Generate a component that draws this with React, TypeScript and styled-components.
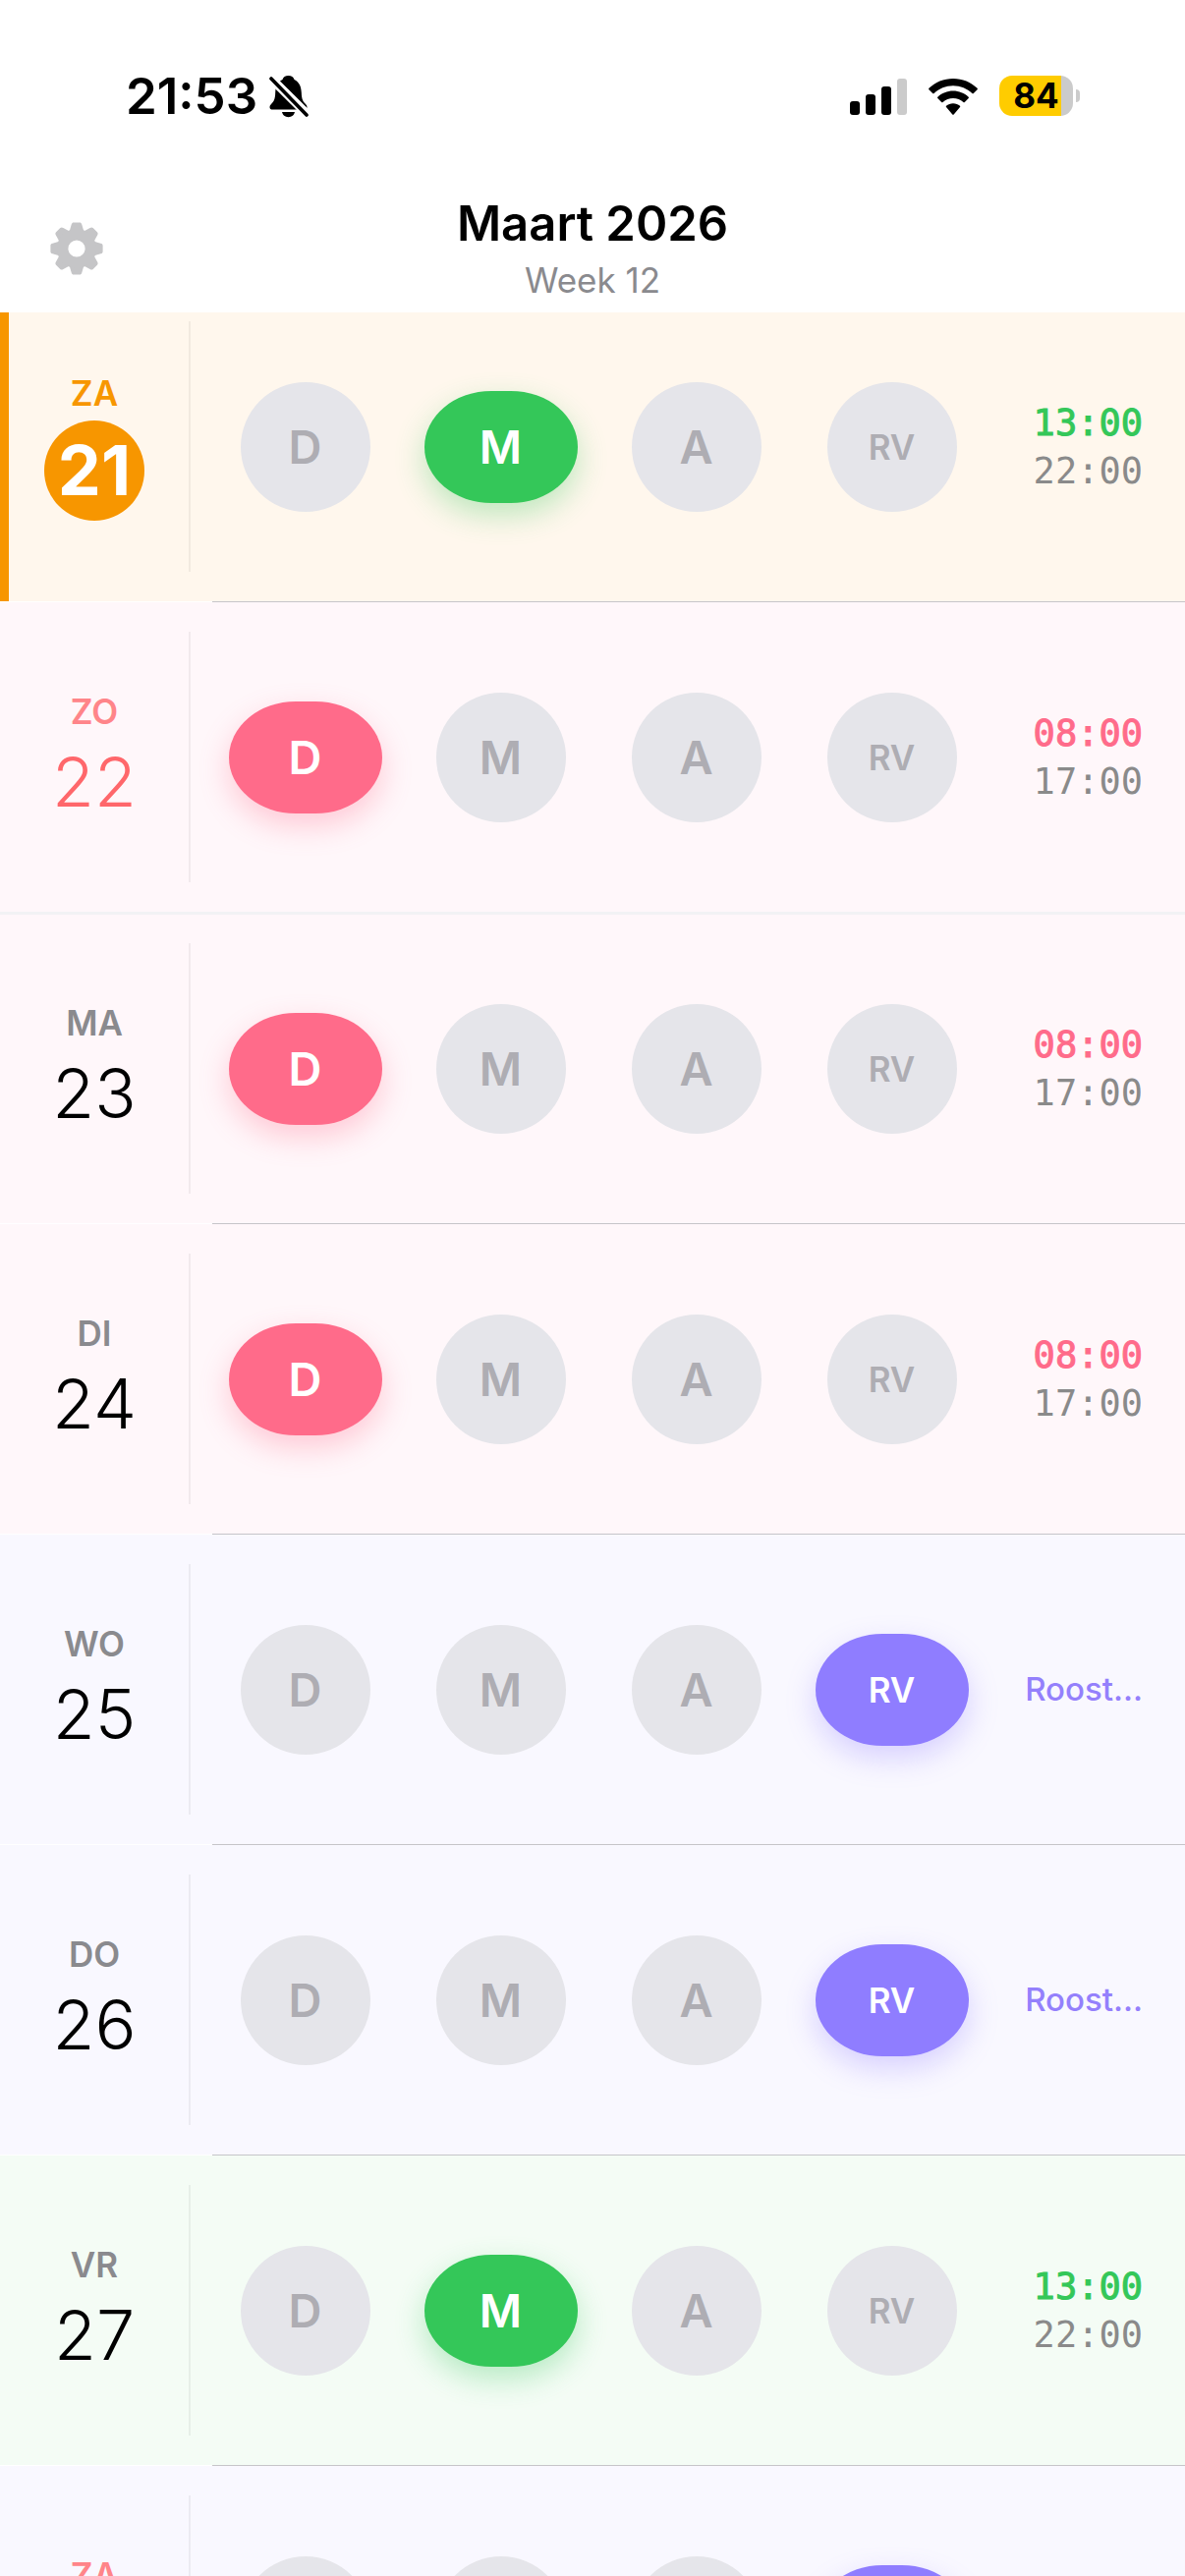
import React from "react";
import styled, { createGlobalStyle, css } from "styled-components";

const GlobalStyle = createGlobalStyle`
  *, *::before, *::after { box-sizing: border-box; }
  html, body, #root { height: 100%; }
  body {
    margin: 0;
    background: #ffffff;
    color: #000000;
    font-family: Inter, "Liberation Sans", sans-serif;
    overflow: hidden;
  }
  button { font: inherit; border: 0; padding: 0; background: none; cursor: pointer; }
`;

type ShiftCode = "D" | "M" | "A" | "RV";

const shiftColors: Record<ShiftCode, { solid: string; tint: string; shadow: string }> = {
  D: { solid: "#ff6b8a", tint: "#fff7fa", shadow: "rgba(255, 107, 138, 0.32)" },
  M: { solid: "#34c759", tint: "#f4fcf5", shadow: "rgba(52, 199, 89, 0.32)" },
  A: { solid: "#ff9500", tint: "#fff6ec", shadow: "rgba(255, 149, 0, 0.32)" },
  RV: { solid: "#8f7dff", tint: "#f9f8ff", shadow: "rgba(143, 125, 255, 0.32)" },
};

const shiftCodes: ShiftCode[] = ["D", "M", "A", "RV"];

interface Day {
  name: string;
  date: number;
  shift: ShiftCode;
  start?: string;
  end?: string;
  note?: string;
  today?: boolean;
  weekend?: boolean;
  endsWeek?: boolean;
}

const days: Day[] = [
  { name: "ZA", date: 21, shift: "M", start: "13:00", end: "22:00", today: true },
  { name: "ZO", date: 22, shift: "D", start: "08:00", end: "17:00", weekend: true, endsWeek: true },
  { name: "MA", date: 23, shift: "D", start: "08:00", end: "17:00" },
  { name: "DI", date: 24, shift: "D", start: "08:00", end: "17:00" },
  { name: "WO", date: 25, shift: "RV", note: "Roost…" },
  { name: "DO", date: 26, shift: "RV", note: "Roost…" },
  { name: "VR", date: 27, shift: "M", start: "13:00", end: "22:00" },
  { name: "ZA", date: 28, shift: "RV", note: "Roost…", weekend: true },
];

const Screen = styled.div`
  height: 100%;
  display: flex;
  flex-direction: column;
  overflow: hidden;
`;

const TopArea = styled.header`
  position: relative;
  z-index: 2;
  flex: none;
  background: #ffffff;
`;

const StatusBar = styled.div`
  display: flex;
  align-items: center;
  justify-content: space-between;
  height: 195px;
  padding: 0 107px 0 128px;
`;

const StatusGroup = styled.div<{ $gap: number }>`
  display: flex;
  align-items: center;
  gap: ${(p) => p.$gap}px;
`;

const Clock = styled.time`
  font-size: 51px;
  line-height: 60px;
  font-weight: 600;
`;

const Battery = styled.div`
  display: flex;
  align-items: center;
  gap: 3px;
`;

const BatteryBody = styled.div<{ $level: number }>`
  width: 75px;
  height: 41px;
  border-radius: 13px;
  display: flex;
  align-items: center;
  justify-content: center;
  background: linear-gradient(to right, #ffcc00 ${(p) => p.$level}%, #cbcbcb ${(p) => p.$level}%);
  font-size: 35px;
  line-height: 41px;
  font-weight: 700;
`;

const BatteryTip = styled.div`
  width: 4px;
  height: 13px;
  border-radius: 0 6px 6px 0;
  background: #cbcbcb;
`;

const TitleBar = styled.div`
  display: grid;
  grid-template-columns: 108px 1fr 108px;
  align-items: center;
  height: 123px;
  padding: 0 24px 8px;
`;

const SettingsButton = styled.button`
  justify-self: center;
  display: flex;
  color: #c5c5c7;
`;

const TitleText = styled.div`
  display: flex;
  flex-direction: column;
  align-items: center;
`;

const Title = styled.h1`
  margin: 0;
  font-size: 49px;
  line-height: 64px;
  font-weight: 600;
`;

const Subtitle = styled.p`
  margin: 0;
  font-size: 35px;
  line-height: 50px;
  color: #8a8a8e;
`;

/* The list is scrolled a little, so its first row starts under the header. */
const Schedule = styled.main`
  flex: 1;
  min-height: 0;
  margin-top: -21px;
  overflow: hidden;
`;

const Row = styled.section<{ $tint: string; $today?: boolean }>`
  display: flex;
  align-items: center;
  height: 315px;
  padding-right: 43px;
  background: ${(p) => p.$tint};
  ${(p) =>
    p.$today &&
    css`
      box-shadow: inset 9px 0 0 #f79600;
    `}
`;

const RowLine = styled.div`
  height: 1px;
  margin-left: 216px;
  background: #c6c5c9;
`;

const WeekLine = styled.div`
  position: relative;
  height: 3px;
  margin-bottom: -1px;
  background: #f2f2f4;
`;

const DayColumn = styled.div`
  flex: none;
  width: 194px;
  height: 255px;
  display: flex;
  flex-direction: column;
  align-items: center;
  justify-content: center;
  gap: 6px;
  border-right: 2px solid rgba(0, 0, 0, 0.05);
`;

const DayName = styled.div<{ $color: string }>`
  font-size: 35px;
  line-height: 43px;
  font-weight: 600;
  color: ${(p) => p.$color};
`;

const DayNumber = styled.div<{ $color: string; $today?: boolean }>`
  font-size: 70px;
  line-height: 87px;
  font-weight: 300;
  color: ${(p) => p.$color};
  ${(p) =>
    p.$today &&
    css`
      width: 102px;
      line-height: 102px;
      border-radius: 50%;
      text-align: center;
      font-weight: 700;
      background: #f79600;
    `}
`;

const Shifts = styled.div`
  flex: 1;
  display: grid;
  grid-template-columns: repeat(4, 1fr);
  align-items: center;
  justify-items: center;
  padding: 0 36px 0 17px;
`;

const ShiftButton = styled.button<{ $active: boolean; $code: ShiftCode }>`
  width: 132px;
  height: 132px;
  border-radius: 50%;
  background: #e5e5ea;
  color: #aeadb3;
  font-size: ${(p) => (p.$code === "RV" ? 35 : 47)}px;
  font-weight: 600;
  ${(p) =>
    p.$active &&
    css`
      width: 156px;
      height: 114px;
      border-radius: 68px / 57px;
      background: ${shiftColors[p.$code].solid};
      box-shadow: 0 12px 30px ${shiftColors[p.$code].shadow};
      color: #ffffff;
    `}
`;

const Hours = styled.div`
  flex: none;
  width: 120px;
  display: flex;
  flex-direction: column;
  align-items: flex-end;
  gap: 6px;
`;

const Hour = styled.time<{ $color: string; $strong?: boolean }>`
  font-family: "DejaVu Sans Mono", monospace;
  font-size: 37px;
  line-height: 43px;
  color: ${(p) => p.$color};
  ${(p) =>
    p.$strong &&
    css`
      -webkit-text-stroke: 1px currentColor;
    `}
`;

const Note = styled.span`
  font-size: 33px;
  line-height: 43px;
  font-weight: 500;
  white-space: nowrap;
  color: #9480fc;
`;

function BellSlashIcon() {
  return (
    <svg width="40" height="44" viewBox="0 0 40 44" aria-hidden="true">
      <path
        fill="#000"
        d="M19.500 1c-3.200 0-5.200 1.600-6 4C8.500 7.600 6.400 12 6.200 18.500c-.2 7-1.700 8.800-4 11.200C.8 31.200.5 32 .5 33.200c0 1.400 1.200 2.300 3 2.300h32c1.800 0 3-.9 3-2.300 0-1.200-.3-2-1.700-3.500-2.300-2.400-3.800-4.200-4-11.200-.2-6.500-2.300-10.900-7.300-13.500C24.700 2.600 22.700 1 19.500 1Z"
      />
      <path fill="#000" d="M13 38h13c-.5 3-3.100 5.200-6.500 5.200S13.500 41 13 38Z" />
      <path d="M-1 1 41 42.500" stroke="#fff" strokeWidth="9" />
      <path d="M2 4 38 41" stroke="#000" strokeWidth="3.600" strokeLinecap="round" />
    </svg>
  );
}

function SignalIcon() {
  return (
    <svg width="58" height="38" viewBox="0 0 58 38" aria-hidden="true">
      <rect x="0" y="24" width="10" height="14" rx="3" />
      <rect x="16" y="17" width="10" height="21" rx="3" />
      <rect x="32" y="9" width="10" height="29" rx="3" />
      <rect x="48" y="1" width="10" height="37" rx="3" fill="#cbcbcb" />
    </svg>
  );
}

function WifiIcon() {
  return (
    <svg width="50" height="38" viewBox="0 0 50 38" aria-hidden="true">
      <path d="M25 1C15.500 1 6.800 4.700.4 10.800c-.4.400-.4 1 0 1.400l3.800 3.800c.4.400 1 .4 1.400 0C10.700 11.200 17.500 8.300 25 8.300s14.300 2.900 19.400 7.700c.4.400 1 .4 1.400 0l3.800-3.800c.4-.4.4-1 0-1.400C43.200 4.700 34.500 1 25 1Z" />
      <path d="M25 13.600c-6 0-11.500 2.300-15.700 6.100-.4.400-.4 1 0 1.400l3.900 3.900c.4.400 1 .4 1.400 0 2.800-2.500 6.400-4 10.400-4s7.600 1.500 10.400 4c.4.400 1 .4 1.400 0l3.900-3.900c.4-.4.4-1 0-1.400-4.200-3.800-9.700-6.100-15.700-6.100Z" />
      <path d="M25 26.200c-2.700 0-5.100.9-7 2.500-.4.400-.4 1 0 1.400l6.300 7.400c.4.400 1 .4 1.400 0l6.300-7.400c.4-.4.4-1 0-1.400-1.900-1.600-4.300-2.500-7-2.500Z" />
    </svg>
  );
}

function GearIcon() {
  const teeth = [0, 45, 90, 135, 180, 225, 270, 315];
  return (
    <svg width="54" height="54" viewBox="-27 -27 54 54" fill="currentColor" aria-hidden="true">
      {teeth.map((angle) => (
        <path
          key={angle}
          transform={`rotate(${angle})`}
          d="M-7.500-17-5.300-24.500C-4.900-26-4.200-26.600-3-26.600H3C4.200-26.600 4.900-26 5.300-24.500L7.500-17Z"
        />
      ))}
      <path
        fillRule="evenodd"
        d="M0-20a20 20 0 1 0 0 40a20 20 0 1 0 0-40ZM0-8.600a8.600 8.600 0 1 1 0 17.200a8.600 8.600 0 1 1 0-17.200Z"
      />
    </svg>
  );
}

function DayRow({ day }: { day: Day }) {
  const colors = shiftColors[day.shift];
  const nameColor = day.today ? "#f79600" : day.weekend ? "#ff8589" : "#8a8a8e";
  const numberColor = day.today ? "#ffffff" : day.weekend ? "#ff676b" : "#000000";
  return (
    <>
      <Row $tint={day.today ? "#fff7ed" : colors.tint} $today={day.today}>
        <DayColumn>
          <DayName $color={nameColor}>{day.name}</DayName>
          <DayNumber $color={numberColor} $today={day.today}>
            {day.date}
          </DayNumber>
        </DayColumn>
        <Shifts>
          {shiftCodes.map((code) => (
            <ShiftButton
              key={code}
              type="button"
              $code={code}
              $active={code === day.shift}
              aria-pressed={code === day.shift}
            >
              {code}
            </ShiftButton>
          ))}
        </Shifts>
        <Hours>
          {day.start && (
            <Hour $color={colors.solid} $strong>
              {day.start}
            </Hour>
          )}
          {day.end && <Hour $color="#8a8a8a">{day.end}</Hour>}
          {day.note && <Note>{day.note}</Note>}
        </Hours>
      </Row>
      {day.endsWeek ? <WeekLine /> : <RowLine />}
    </>
  );
}

export default function App() {
  return (
    <>
      <GlobalStyle />
      <Screen>
        <TopArea>
          <StatusBar>
            <StatusGroup $gap={12}>
              <Clock>21:53</Clock>
              <BellSlashIcon />
            </StatusGroup>
            <StatusGroup $gap={22}>
              <SignalIcon />
              <WifiIcon />
              <Battery>
                <BatteryBody $level={84}>84</BatteryBody>
                <BatteryTip />
              </Battery>
            </StatusGroup>
          </StatusBar>
          <TitleBar>
            <SettingsButton type="button" aria-label="Instellingen">
              <GearIcon />
            </SettingsButton>
            <TitleText>
              <Title>Maart 2026</Title>
              <Subtitle>Week 12</Subtitle>
            </TitleText>
          </TitleBar>
        </TopArea>
        <Schedule>
          {days.map((day) => (
            <DayRow key={day.date} day={day} />
          ))}
        </Schedule>
      </Screen>
    </>
  );
}
